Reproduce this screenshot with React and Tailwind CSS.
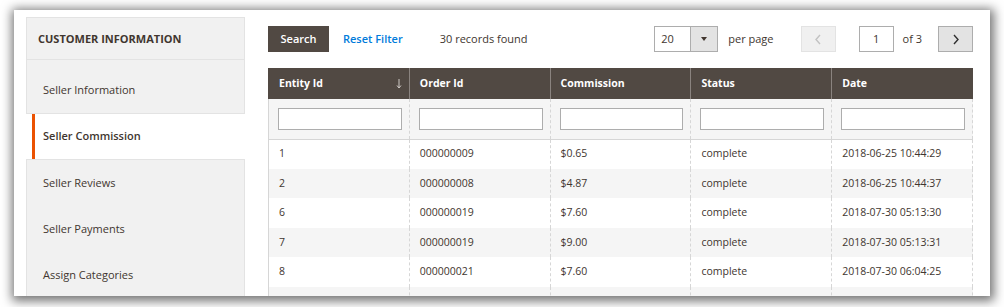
import React from 'react';

const rows = [
  ['1', '000000009', '$0.65', 'complete', '2018-06-25 10:44:29'],
  ['2', '000000008', '$4.87', 'complete', '2018-06-25 10:44:37'],
  ['6', '000000019', '$7.60', 'complete', '2018-07-30 05:13:30'],
  ['7', '000000019', '$9.00', 'complete', '2018-07-30 05:13:31'],
  ['8', '000000021', '$7.60', 'complete', '2018-07-30 06:04:25'],
  ['', '', '', '', ''],
];

const columns = ['Entity Id', 'Order Id', 'Commission', 'Status', 'Date'];

function Chevron({dir, color}) {
  const pts = dir === 'left' ? '6,1 2,5.5 6,10' : '2,1 6,5.5 2,10';
  return (
    <svg width="8" height="11" viewBox="0 0 8 11">
      <polyline points={pts} fill="none" stroke={color} strokeWidth="1.4" />
    </svg>
  );
}

function Sidebar() {
  return (
    <div className="w-[219px] shrink-0 text-[11px] text-[#41362f]">
      <div className="border border-[#e3e3e3] bg-[#f1f1f1]">
        <div className="h-[42px] flex items-center pl-[11px] pt-[1px] font-bold border-b border-[#e3e3e3]">
          CUSTOMER INFORMATION
        </div>
        <div className="pt-[7px]">
          <div className="h-[46px] flex items-center pl-[16px]">Seller Information</div>
        </div>
      </div>
      <div className="h-[45px] ml-[6px] w-[220px] bg-white border-l-[3px] border-[#eb5202] pl-[8px] flex items-center font-semibold">
        Seller Commission
      </div>
      <div className="border border-[#e3e3e3] bg-[#f1f1f1] h-[200px]">
        {['Seller Reviews', 'Seller Payments', 'Assign Categories'].map((t) => (
          <div key={t} className="h-[46px] flex items-center pl-[16px]">
            {t}
          </div>
        ))}
      </div>
    </div>
  );
}

function Toolbar() {
  return (
    <div className="h-[26px] flex items-center justify-between text-[11px] text-[#41362f]">
      <div className="flex items-center">
        <button className="h-[26px] w-[61px] bg-[#514943] text-white font-semibold">Search</button>
        <span className="ml-[14px] text-[#007bdb] font-semibold">Reset Filter</span>
        <span className="ml-[37px]">30 records found</span>
      </div>
      <div className="flex items-center">
        <div className="flex h-[26px] w-[64px] border border-[#adadad]">
          <div className="flex-1 bg-white flex items-center pl-[6px]">20</div>
          <div className="w-[27px] bg-[#e3e3e3] border-l border-[#adadad] flex items-center justify-center">
            <svg width="6" height="4" viewBox="0 0 6 4">
              <polygon points="0,0 6,0 3,4" fill="#41362f" />
            </svg>
          </div>
        </div>
        <span className="ml-[10px]">per page</span>
        <div className="ml-[27px] h-[26px] w-[35px] bg-[#f0f0f0] border border-[#e3e3e3] flex items-center justify-center">
          <Chevron dir="left" color="#c2c2c2" />
        </div>
        <div className="ml-[23px] h-[26px] w-[35px] bg-white border border-[#adadad] flex items-center justify-center">
          1
        </div>
        <span className="ml-[9px]">of 3</span>
        <div className="ml-[16px] h-[26px] w-[35px] bg-[#e3e3e3] border border-[#adadad] flex items-center justify-center">
          <Chevron dir="right" color="#303030" />
        </div>
      </div>
    </div>
  );
}

function Grid() {
  return (
    <table className="mt-[16px] w-[705px] table-fixed border-collapse text-[10.5px] text-[#41362f]">
      <thead>
        <tr className="h-[31px] bg-[#514943] text-white">
          {columns.map((c, i) => (
            <th
              key={c}
              className={
                'text-left font-bold pl-[10px] pt-[1px] border-[#8a837f] ' +
                (i === 0 ? 'border-l border-l-[#514943]' : 'border-l')
              }
            >
              <div className="flex items-center justify-between pr-[7px]">
                <span>{c}</span>
                {i === 0 && (
                  <svg width="6" height="10" viewBox="0 0 6 10">
                    <line x1="3" y1="0" x2="3" y2="9" stroke="#cfcac6" strokeWidth="1" />
                    <polyline points="1,6.5 3,9 5,6.5" fill="none" stroke="#cfcac6" strokeWidth="1" />
                  </svg>
                )}
              </div>
            </th>
          ))}
        </tr>
      </thead>
      <tbody>
        <tr className="h-[40px] bg-[#f5f5f5] border-b border-[#d6d6d6]">
          {columns.map((c, i) => (
            <td
              key={c}
              className={
                'pl-[9px] pr-[7px] ' +
                (i === 0 ? 'border-l border-[#d6d6d6]' : 'border-l border-dashed border-[#d6d6d6]') +
                (i === 4 ? ' border-r' : '')
              }
            >
              <div className="h-[22px] bg-white border border-[#adadad]" />
            </td>
          ))}
        </tr>
        {rows.map((r, ri) => (
          <tr key={ri} className={'h-[29.6px] ' + (ri % 2 ? 'bg-[#f5f5f5]' : 'bg-white')}>
            {r.map((v, i) => (
              <td
                key={i}
                className={
                  'pl-[10px] ' +
                  (i === 0 ? 'border-l border-[#d6d6d6]' : 'border-l border-dashed border-[#d6d6d6]') +
                  (i === 4 ? ' border-r' : '')
                }
              >
                {v}
              </td>
            ))}
          </tr>
        ))}
      </tbody>
    </table>
  );
}

export default function App() {
  return (
    <div className="w-[1004px] h-[307px] overflow-hidden bg-white pt-[10px] pl-[14px] font-['Open_Sans',sans-serif]">
      <div className="w-[976px] h-[286px] bg-white overflow-hidden flex pl-[12px] pt-[7px] shadow-[1px_2px_10px_3px_rgba(0,0,0,0.55)]">
        <Sidebar />
        <div className="ml-[23px] mt-[9px] w-[705px]">
          <Toolbar />
          <Grid />
        </div>
      </div>
    </div>
  );
}
